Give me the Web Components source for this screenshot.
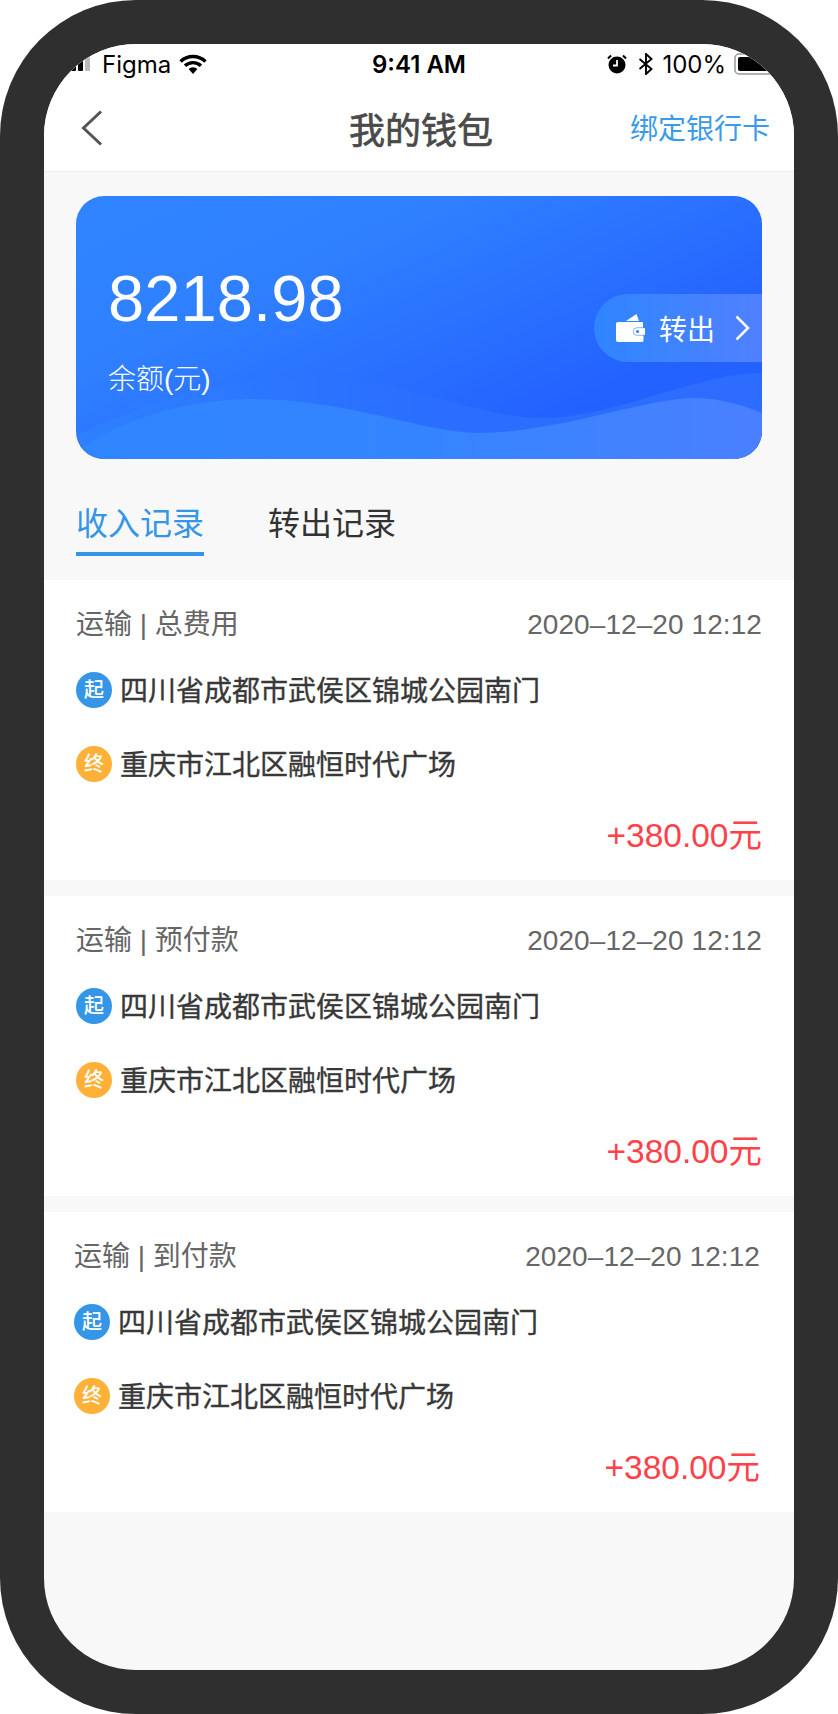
<!DOCTYPE html>
<html lang="zh">
<head>
<meta charset="utf-8">
<title>我的钱包</title>
<style>
  html, body { margin: 0; padding: 0; background: #fff; }
  body { font-family: "Liberation Sans", "Noto Sans CJK SC", sans-serif; }
</style>
</head>
<body>
<phone-frame>
  <status-bar></status-bar>
  <nav-header title="我的钱包" action="绑定银行卡"></nav-header>
  <wallet-card amount="8218.98" label="余额(元)"></wallet-card>
  <record-tabs></record-tabs>
  <record-item kind="总费用"></record-item>
  <record-item kind="预付款"></record-item>
  <record-item kind="到付款" shift></record-item>
</phone-frame>

<script>
const CN = '"Liberation Sans", "Noto Sans CJK SC", sans-serif';

class PhoneFrame extends HTMLElement {
  constructor() {
    super();
    this.attachShadow({ mode: 'open' });
    this.shadowRoot.innerHTML = `
      <style>
        :host { display: block; width: 838px; height: 1714px; box-sizing: border-box;
          padding: 44px; background: #2f2f2f; border-radius: 136px; }
        .screen { height: 100%; background: #f8f8f8; border-radius: 92px; overflow: hidden; }
      </style>
      <div class="screen"><slot></slot></div>
    `;
  }
}

class StatusBar extends HTMLElement {
  constructor() {
    super();
    this.attachShadow({ mode: 'open' });
    this.shadowRoot.innerHTML = `
      <style>
        :host { display: block; background: #fff; }
        .bar { height: 40px; position: relative; display: flex; align-items: center;
          justify-content: space-between; font: 400 24px Inter, sans-serif; color: #000; }
        .left, .right { display: flex; align-items: center; }
        .left { padding-left: 20px; gap: 10px; }
        .left svg:last-child { margin-left: -2px; }
        .right { gap: 8px; }
        .right svg:first-child { margin-right: 3px; }
        .time { position: absolute; left: 0; right: 0; text-align: center; font-weight: 600; }
        svg { display: block; }
      </style>
      <div class="bar">
        <div class="left">
          <svg width="28" height="14" viewBox="0 0 28 14">
            <rect x="0" y="9" width="5" height="5" rx="1" fill="#000"/>
            <rect x="7" y="6" width="5" height="8" rx="1" fill="#000"/>
            <rect x="14" y="3" width="5" height="11" rx="1" fill="#000"/>
            <rect x="21" y="0" width="5" height="14" rx="1" fill="#bbb"/>
          </svg>
          <span>Figma</span>
          <svg width="28" height="20" viewBox="0 0 28 20">
            <path d="M14 20l-4.400-5a6.400 6.400 0 0 1 8.800 0z" fill="#000"/>
            <path d="M1.500 7.500a18 18 0 0 1 25 0M6 11.800a11.600 11.600 0 0 1 16 0" fill="none" stroke="#000" stroke-width="3.400"/>
          </svg>
        </div>
        <div class="time">9:41 AM</div>
        <div class="right">
          <svg width="20" height="20" viewBox="0 0 20 20">
            <circle cx="10" cy="11" r="8.500" fill="#000"/>
            <path d="M10 6v5.500H6" fill="none" stroke="#fff" stroke-width="1.800"/>
            <path d="M1 4.500 4 1.500M19 4.500 16 1.500" stroke="#000" stroke-width="2"/>
          </svg>
          <svg width="16" height="22" viewBox="0 0 16 22">
            <path d="M1.500 6l12 10-5.500 5V1l5.500 5-12 10" fill="none" stroke="#000" stroke-width="1.900"/>
          </svg>
          <span>100%</span>
          <svg width="60" height="22" viewBox="0 0 60 22">
            <rect x="1" y="1" width="52" height="20" rx="4" fill="none" stroke="#999" stroke-width="1.500"/>
            <rect x="4" y="4" width="46" height="14" rx="2" fill="#000"/>
          </svg>
        </div>
      </div>
    `;
  }
}

class NavHeader extends HTMLElement {
  constructor() {
    super();
    this.attachShadow({ mode: 'open' });
    this.shadowRoot.innerHTML = `
      <style>
        :host { display: block; background: #fff; border-bottom: 1px solid #ececec; }
        .nav { height: 87px; position: relative; display: flex; align-items: center;
          justify-content: space-between; padding: 0 24px 0 37px; font-family: ${CN}; }
        .title { position: absolute; left: 4px; right: 0; text-align: center;
          font-size: 36px; font-weight: 400; color: #4a4a4a; -webkit-text-stroke: .7px #4a4a4a; }
        .action { font-size: 28px; color: #3a9bea; position: relative; padding-bottom: 2px; }
        svg { display: block; position: relative; }
      </style>
      <div class="nav">
        <svg width="22" height="36" viewBox="0 0 22 36">
          <path d="M20 1.500 2.500 18 20 34.500" fill="none" stroke="#555" stroke-width="3"/>
        </svg>
        <div class="title">${this.getAttribute('title')}</div>
        <div class="action">${this.getAttribute('action')}</div>
      </div>
    `;
  }
}

class WalletCard extends HTMLElement {
  constructor() {
    super();
    this.attachShadow({ mode: 'open' });
    this.shadowRoot.innerHTML = `
      <style>
        :host { display: block; padding: 24px 32px 0; }
        .card { position: relative; height: 263px; border-radius: 28px; overflow: hidden;
          background: linear-gradient(155deg, #3085ff 0%, #2f80ff 30%, #2462ff 75%, #2462ff 100%);
          display: flex; align-items: center; justify-content: space-between; color: #fff; }
        .waves { position: absolute; left: 0; top: 0; }
        .sum { position: relative; padding: 0 0 0 32px; }
        .amount { font: 400 65px/76px "Liberation Sans", sans-serif; letter-spacing: .1px; margin-top: 6px; }
        .label { font: 300 28px/40px ${CN}; margin-top: 23px; }
        .out { position: relative; width: 168px; height: 68px; box-sizing: border-box;
          border-radius: 34px 0 0 34px; background: linear-gradient(90deg, #2f85ff, #5080ff);
          display: flex; align-items: center; padding-left: 22px; font: 28px ${CN}; }
        .out span { margin: 0 20px 0 14px; }
        svg { display: block; }
      </style>
      <div class="card">
        <svg class="waves" width="686" height="263" viewBox="0 0 686 263">
          <defs>
            <linearGradient id="back" x1="0" y1="0" x2="1" y2="0">
              <stop offset="0" stop-color="#2e80ff"/>
              <stop offset=".5" stop-color="#2a6eff"/>
              <stop offset="1" stop-color="#2e6cff"/>
            </linearGradient>
            <linearGradient id="front" x1="0" y1="0" x2="1" y2="0">
              <stop offset="0" stop-color="#2f86ff"/>
              <stop offset=".5" stop-color="#3484ff"/>
              <stop offset="1" stop-color="#4a80ff"/>
            </linearGradient>
          </defs>
          <path d="M0 263V240C90 195 170 181 241 181 320 181 400 222 466 222 540 222 620 177 686 177V263Z" fill="url(#back)"/>
          <path d="M7 251C70 210 140 203 177 203 270 203 350 237 402 237 480 237 570 202 618 202 640 202 665 208 686 217V263H0Z" fill="url(#front)"/>
        </svg>
        <div class="sum">
          <div class="amount">${this.getAttribute('amount')}</div>
          <div class="label">${this.getAttribute('label')}</div>
        </div>
        <div class="out">
          <svg width="29" height="28" viewBox="0 0 29 28">
            <path d="M10 7 20.500 0 23 7Z" fill="#fff"/>
            <path d="M2 8H26a1 1 0 0 1 1 1V14H29V21H27.500V26.500A1.500 1.500 0 0 1 26 28H2a2 2 0 0 1-2-2V10a2 2 0 0 1 2-2Z" fill="#fff"/>
            <path d="M29 13.700H21a3.800 3.800 0 0 0 0 7.600H29" fill="none" stroke="#3a84ff" stroke-width=".6"/>
            <circle cx="21.500" cy="17.500" r="1.600" fill="#3a84ff"/>
          </svg>
          <span>转出</span>
          <svg width="15" height="26" viewBox="0 0 15 26">
            <path d="M1.500 1.500 13 13 1.500 24.500" fill="none" stroke="#fff" stroke-width="2.500"/>
          </svg>
        </div>
      </div>
    `;
  }
}

class RecordTabs extends HTMLElement {
  constructor() {
    super();
    this.attachShadow({ mode: 'open' });
    this.shadowRoot.innerHTML = `
      <style>
        :host { display: block; }
        .tabs { display: flex; gap: 64px; padding: 42px 32px 24px; font: 32px/46px ${CN}; color: #333; }
        .tab { padding-bottom: 5px; border-bottom: 4px solid transparent; }
        .on { color: #3596e8; border-color: #3596e8; }
      </style>
      <div class="tabs">
        <div class="tab on">收入记录</div>
        <div class="tab">转出记录</div>
      </div>
    `;
  }
}

class RecordItem extends HTMLElement {
  constructor() {
    super();
    this.attachShadow({ mode: 'open' });
    const dx = this.hasAttribute('shift') ? '-2px' : '0';
    this.shadowRoot.innerHTML = `
      <style>
        :host { display: block; background: #fff; height: 300px; margin-bottom: 16px; overflow: hidden; }
        .in { box-sizing: border-box; height: 100%; padding: 25px 32px 0; transform: translateX(${dx}); }
        .top { display: flex; justify-content: space-between; align-items: center; height: 40px;
          font: 28px/40px ${CN}; color: #666; }
        .date { letter-spacing: .08px; }
        .place { display: flex; align-items: center; gap: 8px; height: 36px; font: 400 28px/36px ${CN};
          color: #383838; }
        .place b { font-weight: 400; padding-top: 3px; -webkit-text-stroke: .35px #383838; }
        .from { margin-top: 27px; }
        .to { margin-top: 38px; }
        .dot { width: 36px; height: 36px; border-radius: 50%; color: #fff; font: 500 20px/36px ${CN};
          text-align: center; flex: none; }
        .dot.a { background: #3596e8; }
        .dot.b { background: #ffb036; }
        .money { margin-top: 34px; text-align: right; font: 33.500px/40px ${CN}; color: #ff4149; }
      </style>
      <div class="in">
        <div class="top"><span>运输 | ${this.getAttribute('kind')}</span><span class="date">2020–12–20 12:12</span></div>
        <div class="place from"><span class="dot a">起</span><b>四川省成都市武侯区锦城公园南门</b></div>
        <div class="place to"><span class="dot b">终</span><b>重庆市江北区融恒时代广场</b></div>
        <div class="money">+380.00元</div>
      </div>
    `;
  }
}

customElements.define('phone-frame', PhoneFrame);
customElements.define('status-bar', StatusBar);
customElements.define('nav-header', NavHeader);
customElements.define('wallet-card', WalletCard);
customElements.define('record-tabs', RecordTabs);
customElements.define('record-item', RecordItem);
</script>
</body>
</html>
